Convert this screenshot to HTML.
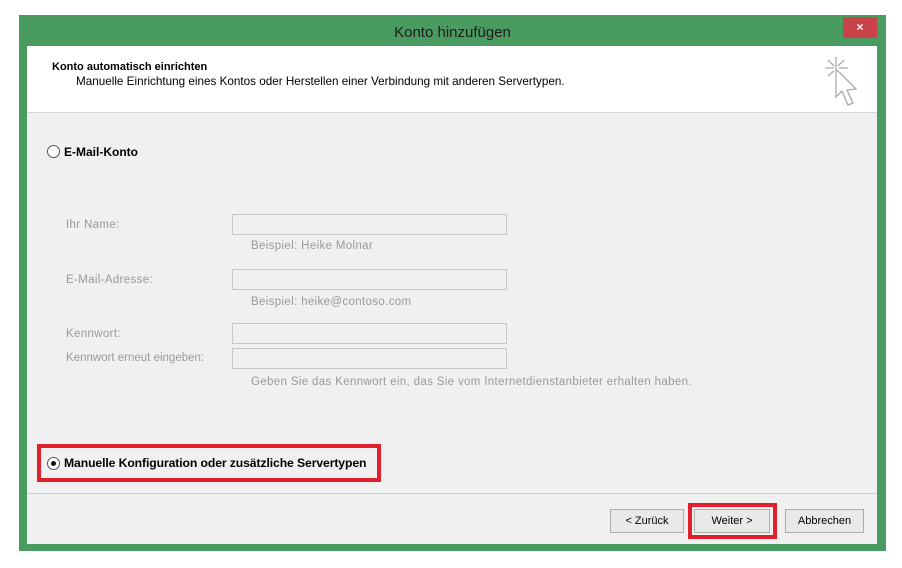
<!DOCTYPE html>
<html><head><meta charset="utf-8"><style>
*{margin:0;padding:0;box-sizing:border-box}
body{width:902px;height:568px;background:#fff;position:relative;overflow:hidden;font-family:"Liberation Sans",sans-serif;font-size:11px;color:#000}
.a{position:absolute;white-space:nowrap}
.g{color:#999;font-size:11.5px;letter-spacing:0.35px}
.inp{position:absolute;left:232px;width:275px;height:21px;border:1px solid #c8c8c8;background:#f0f0f0}
.btn{position:absolute;top:509px;height:24px;border:1px solid #adadad;background:#e9e9e9;text-align:center;line-height:22px;font-size:11px}
.radio{position:absolute;width:13px;height:13px;border:1px solid #555;border-radius:50%;background:#fff}
</style></head><body>
<div class="a" style="left:19px;top:15px;width:867px;height:536px;background:#4a9b5f"></div>
<div class="a" style="left:19px;top:15px;width:867px;height:31px;text-align:center;line-height:36px;font-size:15px;color:#1d1d1d">Konto hinzufügen</div>
<div class="a" style="left:843px;top:17px;width:34px;height:21px;background:#c9424a;color:#fff;text-align:center;line-height:20px;font-size:12px;font-weight:bold">×</div>
<div class="a" style="left:27px;top:46px;width:850px;height:498px;background:#f0f0f0"></div>
<div class="a" style="left:27px;top:46px;width:850px;height:67px;background:#fff;border-bottom:1px solid #d5d5d5"></div>
<div class="a" style="left:52px;top:61px;font-weight:bold;font-size:11px">Konto automatisch einrichten</div>
<div class="a" style="left:76px;top:75px;font-size:11.7px">Manuelle Einrichtung eines Kontos oder Herstellen einer Verbindung mit anderen Servertypen.</div>
<svg class="a" style="left:822px;top:55px" width="42" height="56" viewBox="0 0 42 56" fill="none" stroke="#aaa" stroke-width="1.3">
<path d="M14 2v11M3 13h9M17 13h9M6 5l6 6M22 5l-6 6M6 21l6-5"/>
<path d="M14 14l0 28 6-6 6 14 5-2-6-13 9-1z" fill="#fff"/>
</svg>
<div class="radio" style="left:47px;top:145px"></div>
<div class="a" style="left:64px;top:145px;font-weight:bold;font-size:12px">E-Mail-Konto</div>
<div class="a g" style="left:66px;top:219px">Ihr Name:</div>
<div class="inp" style="top:214px"></div>
<div class="a g" style="left:251px;top:240px">Beispiel: Heike Molnar</div>
<div class="a g" style="left:66px;top:274px">E-Mail-Adresse:</div>
<div class="inp" style="top:269px"></div>
<div class="a g" style="left:251px;top:296px">Beispiel: heike@contoso.com</div>
<div class="a g" style="left:66px;top:328px">Kennwort:</div>
<div class="inp" style="top:323px"></div>
<div class="a g" style="left:66px;top:352px;letter-spacing:0">Kennwort erneut eingeben:</div>
<div class="inp" style="top:348px"></div>
<div class="a g" style="left:251px;top:376px">Geben Sie das Kennwort ein, das Sie vom Internetdienstanbieter erhalten haben.</div>
<div class="a" style="left:37px;top:444px;width:344px;height:38px;border:4px solid #e0202d"></div>
<div class="radio" style="left:47px;top:457px"><div class="a" style="left:3px;top:3px;width:5px;height:5px;border-radius:50%;background:#111"></div></div>
<div class="a" style="left:64px;top:456px;font-weight:bold;font-size:12.2px;letter-spacing:-0.1px">Manuelle Konfiguration oder zusätzliche Servertypen</div>
<div class="a" style="left:27px;top:493px;width:850px;height:1px;background:#cfcfcf"></div>
<div class="btn" style="left:610px;width:74px">&lt; Zurück</div>
<div class="btn" style="left:694px;width:76px">Weiter &gt;</div>
<div class="a" style="left:688px;top:503px;width:89px;height:36px;border:4px solid #e0202d"></div>
<div class="btn" style="left:785px;width:79px">Abbrechen</div>
</body></html>
